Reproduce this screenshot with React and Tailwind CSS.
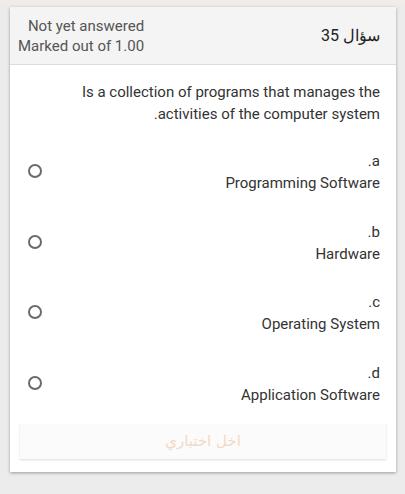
import React from "react";

const options = [
  { l: "a.", t: "Programming Software" },
  { l: "b.", t: "Hardware" },
  { l: "c.", t: "Operating System" },
  { l: "d.", t: "Application Software" },
];

export default function App() {
  return (
    <div className="w-[405px] h-[494px] bg-[#ececec] overflow-hidden" style={{ fontFamily: "Roboto, 'Noto Sans', sans-serif" }}>
      <div className="h-[4px] bg-[#f1ece8]" />
      <div className="mx-[10px] mt-[3px] w-[386px] h-[465px] bg-white shadow-[0_1px_3px_rgba(0,0,0,0.35)] flex flex-col">
        <div dir="rtl" className="h-[58px] bg-[#f4f4f4] border-b border-[#dcdcdc] flex items-center justify-between pr-[16px] pl-[8px]">
          <div className="text-[16px] text-[#222]">سؤال 35</div>
          <div className="text-[15px] leading-[20px] text-[#555] text-right pt-[1px]">
            <div>Not yet answered</div>
            <div>Marked out of 1.00</div>
          </div>
        </div>
        <div dir="rtl" className="pr-[16px] pl-[66px] pt-[16px] text-[15px] leading-[22px] text-[#333] text-right">
          <p>Is a collection of programs that manages the activities of the computer system.</p>
        </div>
        <div className="flex flex-col gap-[26.67px] mt-[25px]">
          {options.map((o) => (
            <div key={o.l} className="h-[44px] flex items-start justify-between pl-[18px] pr-[16px]">
              <div className="w-[14px] h-[14px] rounded-full border-2 border-[#6a6a6a] mt-[14px]" />
              <div dir="rtl" className="text-right text-[15px] leading-[22px] text-[#333]">
                <div>{o.l}</div>
                <div>{o.t}</div>
              </div>
            </div>
          ))}
        </div>
        <div className="mx-[10px] mt-[18px] h-[35px] bg-[#fbfbfb] shadow-[0_1px_2px_rgba(0,0,0,0.15)] flex items-center justify-center">
          <span dir="rtl" className="text-[15px] text-[#f4d9c6]" style={{ fontFamily: "'DejaVu Sans', sans-serif" }}>اخل اختباري</span>
        </div>
      </div>
    </div>
  );
}
